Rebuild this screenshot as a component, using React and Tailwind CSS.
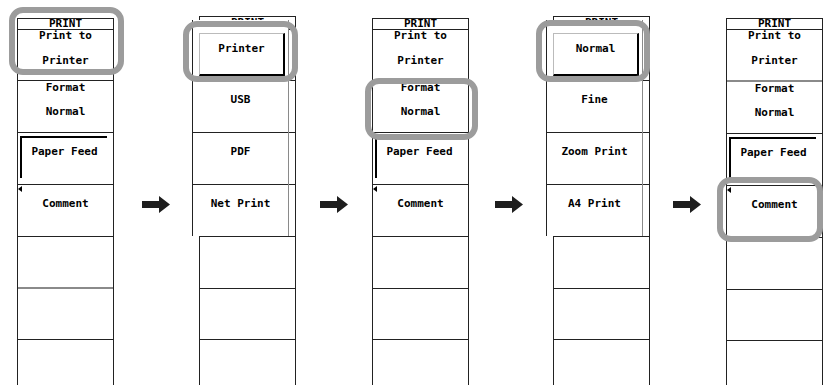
const txt = "font-['DejaVu_Sans_Mono',monospace] font-bold text-[11px] leading-[11px] text-black";

function Arrow({ className }) {
  return (
    <div className={`shrink-0 pt-[196px] ${className}`}>
      <svg width="28" height="17" viewBox="0 0 28 17">
        <polygon points="0,5 17,5 17,0 28,8.5 17,17 17,12 0,12" fill="#1e1e1e" />
      </svg>
    </div>
  );
}

function Highlight({ className }) {
  return (
    <div
      className={`absolute rounded-[14px] border-[6px] border-[#9c9c9c] pointer-events-none ${className}`}
    />
  );
}

function SunkenRow({ label }) {
  return (
    <div className="h-[52px] border-b border-[#222] pt-[3px] pl-[2px] pr-[6px]">
      <div className={`h-[42px] border-l-2 border-t-2 border-black pt-[8px] text-center ${txt}`}>
        {label}
      </div>
    </div>
  );
}

function CommentRow() {
  return (
    <div className={`relative h-[52px] border-b border-[#222] pt-[13px] text-center ${txt}`}>
      <div className="absolute left-0 top-[1px] w-0 h-0 border-y-[3.5px] border-y-transparent border-r-[4px] border-r-black" />
      Comment
    </div>
  );
}

function MainMenu({ grayFormat, grayLower }) {
  return (
    <div className="relative w-[97px] h-[385px] pt-[18px] shrink-0">
      <div className="h-full border-x border-[#222] flex flex-col">
        <div className={`h-[12px] border-y border-[#222] text-center ${txt}`}>
          <div className="leading-[10px]">PRINT</div>
        </div>
        <div
          className={`${grayFormat ? "h-[52px] border-b-2 border-[#8a8a8a]" : "h-[51px] border-b border-[#222]"} text-center`}
        >
          <div className={txt}>Print to</div>
          <div className={`mt-[14px] ${txt}`}>Printer</div>
        </div>
        <div className="h-[52px] border-b border-[#222] text-center pt-[1px]">
          <div className={txt}>Format</div>
          <div className={`mt-[13px] ${txt}`}>Normal</div>
        </div>
        <SunkenRow label="Paper Feed" />
        <CommentRow />
        <div className={`h-[52px] ${grayLower ? "border-b-2 border-[#8a8a8a]" : "border-b border-[#222]"}`} />
        <div className="h-[51px] border-b border-[#222]" />
        <div className="flex-1" />
      </div>
    </div>
  );
}

function SubMenu({ items }) {
  const [first, ...rest] = items;
  return (
    <div className="relative w-[104px] h-[385px] shrink-0">
      <div className="ml-[7px] w-[97px] h-full pt-[16px]">
        <div className="h-full border-x border-[#222] flex flex-col">
          <div className={`h-[14px] border-y border-[#222] text-center overflow-hidden ${txt}`}>
            <div className="leading-[12px]">PRINT</div>
          </div>
          <div className="h-[51px] border-b border-[#222]" />
          <div className="h-[52px] border-b border-[#222]" />
          <div className="h-[52px] border-b border-[#222]" />
          <div className="h-[52px] border-b border-[#222]" />
          <div className="h-[52px] border-b border-[#222]" />
          <div className="h-[51px] border-b border-[#222]" />
          <div className="flex-1" />
        </div>
      </div>
      <div className="absolute left-0 top-[20px] w-[97px] h-[216px] bg-white border-l border-[#222] border-r border-r-[#8a8a8a] flex flex-col">
        <div className="h-[9px]" />
        <div className="h-[52px] border-b border-[#222] pt-[4px] pl-[6px] pr-[3px]">
          <div
            className={`h-[43px] border-t border-l border-[#bbbbbb] border-r-2 border-b-2 border-r-black border-b-black pt-[9px] text-center ${txt}`}
          >
            {first}
          </div>
        </div>
        {rest.map((item, i) => (
          <div
            key={item}
            className={`${i < rest.length - 1 ? "h-[52px] border-b border-[#222]" : "flex-1"} pt-[13px] text-center ${txt}`}
          >
            {item}
          </div>
        ))}
      </div>
    </div>
  );
}

export default function App() {
  return (
    <div className="w-[823px] h-[385px] bg-white overflow-hidden">
      <div className="flex pl-[17px] h-full">
        <div className="relative shrink-0">
          <MainMenu grayLower />
          <Highlight className="left-[-8px] top-[7px] w-[115px] h-[68px]" />
        </div>
        <Arrow className="w-[78px] pl-[28px]" />
        <div className="relative shrink-0">
          <SubMenu items={["Printer", "USB", "PDF", "Net Print"]} />
          <Highlight className="left-[-9px] top-[21px] w-[115px] h-[61px]" />
        </div>
        <Arrow className="w-[76px] pl-[24px]" />
        <div className="relative shrink-0">
          <MainMenu />
          <Highlight className="left-[-7px] top-[78px] w-[113px] h-[62px]" />
        </div>
        <Arrow className="w-[77px] pl-[26px]" />
        <div className="relative shrink-0">
          <SubMenu items={["Normal", "Fine", "Zoom Print", "A4 Print"]} />
          <Highlight className="left-[-10px] top-[20px] w-[114px] h-[62px]" />
        </div>
        <Arrow className="w-[76px] pl-[23px]" />
        <div className="relative shrink-0">
          <MainMenu grayFormat />
          <Highlight className="left-[-9px] top-[177px] w-[106px] h-[65px]" />
        </div>
      </div>
    </div>
  );
}
